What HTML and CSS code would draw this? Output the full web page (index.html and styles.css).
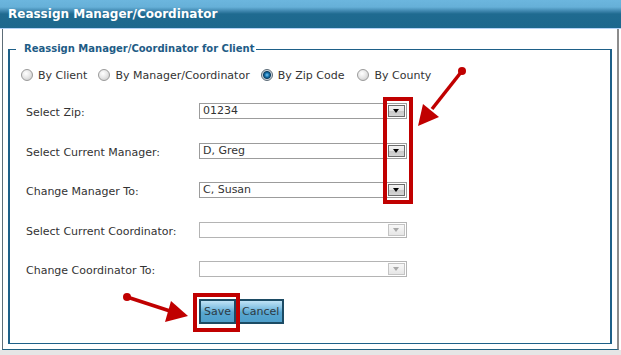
FILE: index.html
```html
<!DOCTYPE html>
<html lang="en">
<head>
    <meta charset="UTF-8">
    <meta name="viewport" content="width=device-width, initial-scale=1.0">
    <title>Reassign Manager/Coordinator</title>
    <link rel="stylesheet" href="styles.css">
</head>
<body>
    <div class="dialog">
        <div class="titlebar">Reassign Manager/Coordinator</div>
        <div class="panel">
            <fieldset class="box">
                <legend>Reassign Manager/Coordinator for Client</legend>

                <div class="mode-row">
                    <label class="opt"><input type="radio" name="mode"> By Client</label>
                    <label class="opt"><input type="radio" name="mode"> By Manager/Coordinator</label>
                    <label class="opt"><input type="radio" name="mode" checked> By Zip Code</label>
                    <label class="opt"><input type="radio" name="mode"> By County</label>
                </div>

                <div class="form-grid">
                    <label>Select Zip:</label>
                    <div class="select"><span class="value">01234</span><span class="drop"></span></div>

                    <label>Select Current Manager:</label>
                    <div class="select"><span class="value">D, Greg</span><span class="drop"></span></div>

                    <label>Change Manager To:</label>
                    <div class="select"><span class="value">C, Susan</span><span class="drop"></span></div>

                    <label>Select Current Coordinator:</label>
                    <div class="select disabled"><span class="value"></span><span class="drop"></span></div>

                    <label>Change Coordinator To:</label>
                    <div class="select disabled"><span class="value"></span><span class="drop"></span></div>
                </div>

                <div class="actions">
                    <button type="button" class="btn">Save</button>
                    <button type="button" class="btn">Cancel</button>
                </div>
            </fieldset>
        </div>

        <!-- annotation marks -->
        <div class="mark mark-drops"></div>
        <div class="mark mark-save"></div>
        <svg class="arrows" width="621" height="355" viewBox="0 0 621 355">
            <g fill="#c00000" stroke="#c00000">
                <circle cx="462" cy="71" r="4" stroke="none"/>
                <line x1="462" y1="71" x2="432" y2="109" stroke-width="3.5"/>
                <polygon points="418,126 423,104 439,117" stroke="none"/>

                <circle cx="127" cy="297" r="4" stroke="none"/>
                <line x1="127" y1="297" x2="170" y2="311" stroke-width="3.5"/>
                <polygon points="188,316 171,301 165,322" stroke="none"/>
            </g>
        </svg>
    </div>
</body>
</html>
```

FILE: styles.css
```css
body {
    margin: 0;
    background-color: #e6e6e6;
    font-family: "DejaVu Sans", Verdana, sans-serif;
    font-size: 11px;
    color: #333;
}
.dialog {
    position: relative;
    width: 621px;
    height: 350px;
    background-color: #fff;
}
.titlebar {
    height: 29px;
    box-sizing: border-box;
    padding-left: 8px;
    line-height: 28px;
    color: #fff;
    font-size: 12px;
    font-weight: bold;
    background: linear-gradient(#6cb6de 0, #66b0d8 7px, #3f86ae 11px, #1f6a90 14px, #1d688d 100%);
    border-bottom: 1px solid #b3d2f7;
}
.panel {
    margin: 0 2px;
    height: 321px;
    box-sizing: border-box;
    padding: 13px 5px 0 5px;
    background-color: #fff;
    border-left: 1px solid #5d6d77;
    border-right: 2px solid #8c8c8c;
    border-bottom: 1px solid #1e5f80;
}
.box {
    margin: 0;
    padding: 0;
    height: 302px;
    box-sizing: border-box;
    border-style: solid;
    border-color: #1e6088;
    border-width: 1px 2px;
}
.box legend {
    margin-left: 6px;
    padding: 0 2px 0 8px;
    font-size: 10px;
    font-weight: bold;
    color: #1e5c86;
    line-height: 14px;
}
.mode-row {
    display: flex;
    align-items: center;
    padding: 11px 0 0 11px;
    height: 16px;
}
.opt {
    display: flex;
    align-items: center;
    gap: 5px;
    margin-right: 11px;
}
.opt:last-child {
    margin-left: 2px;
}
.opt input {
    appearance: none;
    width: 12px;
    height: 12px;
    margin: 0;
    border-radius: 50%;
    border: 1px solid #9a9a9a;
    background: radial-gradient(circle at 40% 35%, #fff 0, #e8e8e8 45%, #c4c4c4 100%);
    box-sizing: border-box;
}
.opt input:checked {
    border-color: #5a6a76;
    background: radial-gradient(circle at 50% 50%, #7fc6f0 0, #1677b4 2px, #0d3f63 3.5px, #cfd6dc 4.5px, #eef0f2 100%);
}
.form-grid {
    display: grid;
    grid-template-columns: 173px 208px;
    grid-auto-rows: 16px;
    row-gap: 23.5px;
    padding: 20px 0 0 16px;
    align-items: center;
}
.form-grid label {
    padding-top: 3px;
}
.select {
    display: flex;
    align-items: center;
    height: 16px;
    box-sizing: border-box;
    border: 1px solid #9c9c9c;
    background-color: #fff;
    padding: 0 1px 0 3px;
}
.select .value {
    flex: 1;
    line-height: 14px;
}
.drop {
    position: relative;
    width: 17px;
    height: 12px;
    box-sizing: border-box;
    border: 1px solid #6c6c6c;
    background: linear-gradient(#f4f4f4 0, #e4e4e4 50%, #cacaca 55%, #d4d4d4 100%);
}
.drop::after {
    content: "";
    position: absolute;
    left: 4px;
    top: 3px;
    border-left: 3.5px solid transparent;
    border-right: 3.5px solid transparent;
    border-top: 4px solid #000;
}
.select.disabled {
    border-color: #b4b4b4;
}
.select.disabled .drop {
    border-color: #c4c4c4;
    background: linear-gradient(#f8f8f8, #e6e6e6);
}
.select.disabled .drop::after {
    border-top-color: #a8a8a8;
}
.actions {
    display: flex;
    gap: 1px;
    padding: 22px 0 0 189px;
}
.btn {
    height: 25px;
    padding: 0 3px;
    font-family: "DejaVu Sans", Verdana, sans-serif;
    font-size: 11px;
    color: #2c3a44;
    border: 2px solid #1c4b64;
    background: linear-gradient(#bfe2f5 0, #8cc6e6 30%, #58a6d0 55%, #4f9fcb 100%);
    cursor: pointer;
}
.mark {
    position: absolute;
    box-sizing: border-box;
    border: 4px solid #c00000;
}
.mark-drops {
    left: 383px;
    top: 97px;
    width: 30px;
    height: 107px;
}
.mark-save {
    left: 193px;
    top: 293px;
    width: 47px;
    height: 39px;
}
.arrows {
    position: absolute;
    left: 0;
    top: 0;
    pointer-events: none;
}
```
